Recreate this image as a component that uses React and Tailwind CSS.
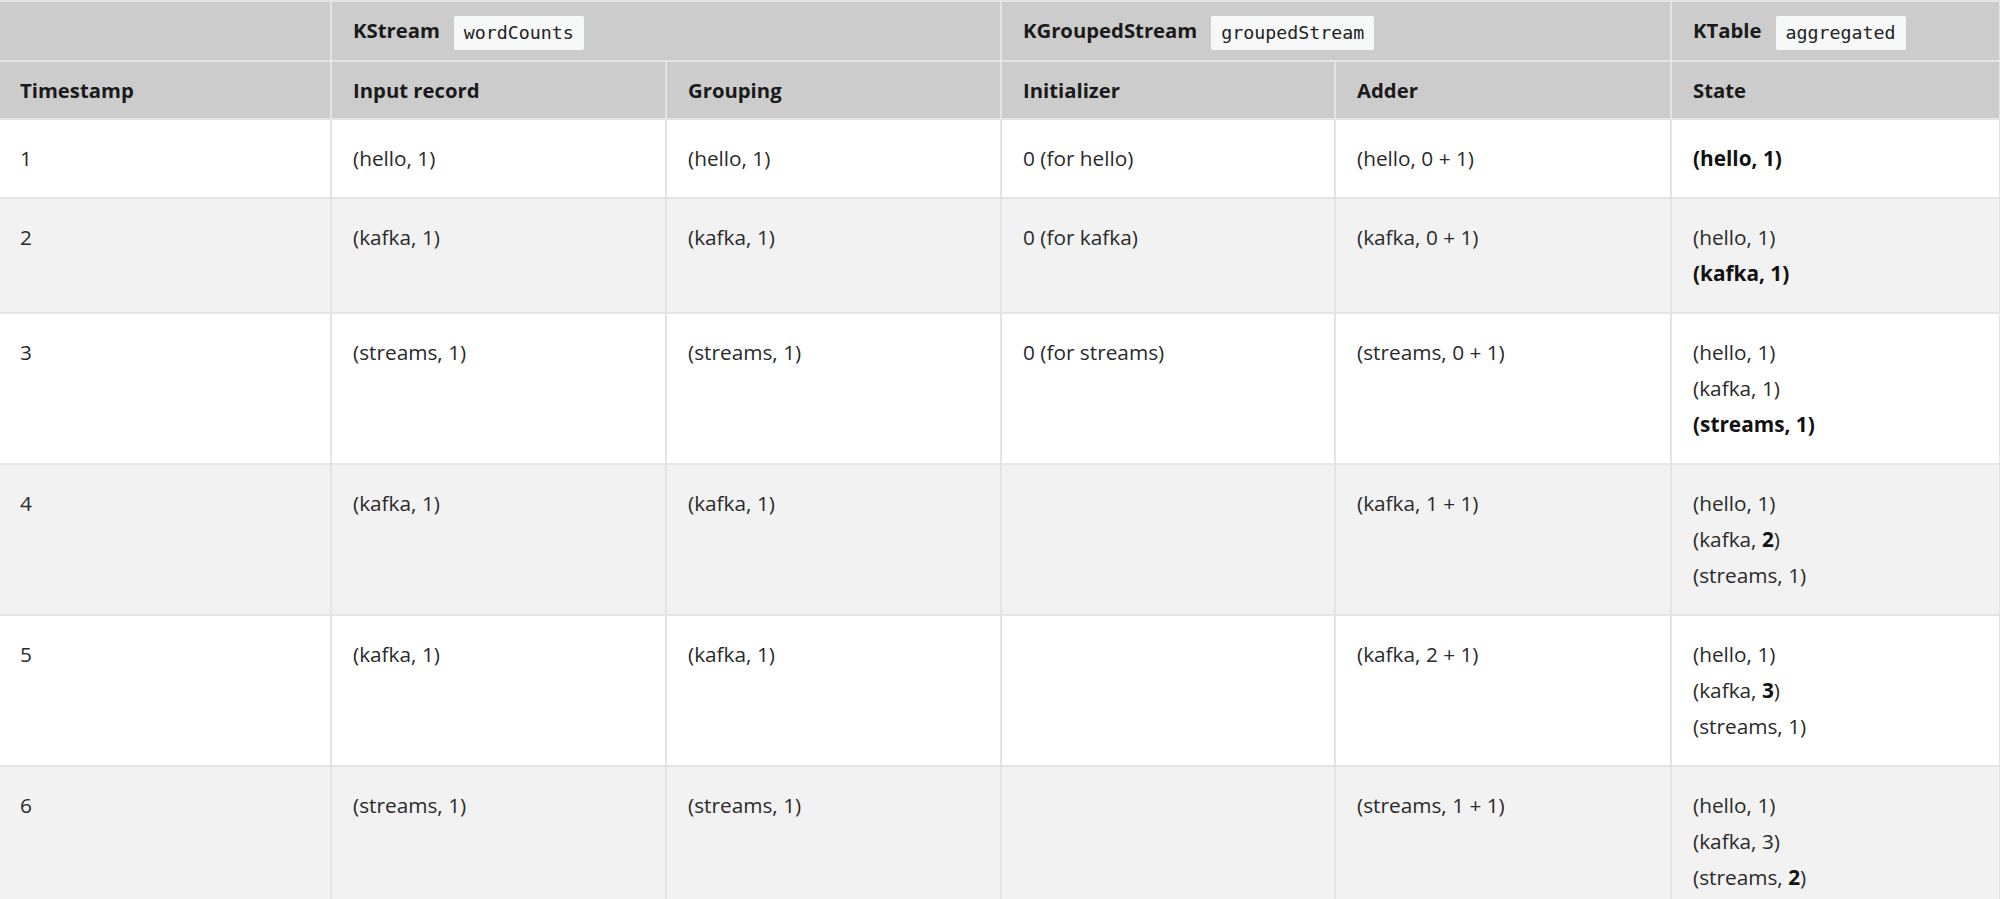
const font = "font-['Open_Sans','Noto_Sans',sans-serif]";

function Code({children}) {
  return (
    <code className="ml-[14px] inline-block rounded-[2px] bg-[#f7f9f9] px-[10px] py-[2px] align-middle font-['DejaVu_Sans_Mono',monospace] text-[18.3px] font-normal leading-[30px] text-[#222]">
      {children}
    </code>
  );
}

const rows = [
  {
    ts: '1',
    input: '(hello, 1)',
    grouping: '(hello, 1)',
    init: '0 (for hello)',
    adder: '(hello, 0 + 1)',
    state: [<b key="a" className="font-bold text-[#111]">(hello, 1)</b>],
  },
  {
    ts: '2',
    input: '(kafka, 1)',
    grouping: '(kafka, 1)',
    init: '0 (for kafka)',
    adder: '(kafka, 0 + 1)',
    state: [
      '(hello, 1)',
      <b key="b" className="font-bold text-[#111]">(kafka, 1)</b>,
    ],
  },
  {
    ts: '3',
    input: '(streams, 1)',
    grouping: '(streams, 1)',
    init: '0 (for streams)',
    adder: '(streams, 0 + 1)',
    state: [
      '(hello, 1)',
      '(kafka, 1)',
      <b key="c" className="font-bold text-[#111]">(streams, 1)</b>,
    ],
  },
  {
    ts: '4',
    input: '(kafka, 1)',
    grouping: '(kafka, 1)',
    init: '',
    adder: '(kafka, 1 + 1)',
    state: [
      '(hello, 1)',
      <span key="d">(kafka, <b className="font-bold text-[#111]">2</b>)</span>,
      '(streams, 1)',
    ],
  },
  {
    ts: '5',
    input: '(kafka, 1)',
    grouping: '(kafka, 1)',
    init: '',
    adder: '(kafka, 2 + 1)',
    state: [
      '(hello, 1)',
      <span key="e">(kafka, <b className="font-bold text-[#111]">3</b>)</span>,
      '(streams, 1)',
    ],
  },
  {
    ts: '6',
    input: '(streams, 1)',
    grouping: '(streams, 1)',
    init: '',
    adder: '(streams, 1 + 1)',
    state: [
      '(hello, 1)',
      '(kafka, 3)',
      <span key="f">(streams, <b className="font-bold text-[#111]">2</b>)</span>,
    ],
  },
];

const th = 'border-2 border-[#e4e4e4] bg-[#cccccc] px-[21px] text-left text-[20.3px] font-bold text-[#1a1a1a]';
const td = 'border-2 border-[#e4e4e4] px-[21px] pt-[20px] pb-[21px] align-top';

export default function App() {
  return (
    <div className={`h-[899px] w-[2000px] overflow-hidden bg-white ${font} text-[20.8px] leading-[36px] text-[#2a2a2a]`}>
      <table className="w-[2000px] table-fixed border-collapse border-t-2 border-[#e4e4e4]">
        <colgroup>
          <col className="w-[331px]" />
          <col className="w-[335px]" />
          <col className="w-[335px]" />
          <col className="w-[334px]" />
          <col className="w-[336px]" />
          <col className="w-[329px]" />
        </colgroup>
        <thead>
          <tr className="h-[60px]">
            <th className={`${th} border-l-0 pl-[20px]`}></th>
            <th className={th} colSpan={2}>
              KStream<Code>wordCounts</Code>
            </th>
            <th className={th} colSpan={2}>
              KGroupedStream<Code>groupedStream</Code>
            </th>
            <th className={th}>
              KTable<Code>aggregated</Code>
            </th>
          </tr>
          <tr className="h-[58px]">
            <th className={`${th} border-l-0 pl-[20px]`}>Timestamp</th>
            <th className={th}>Input record</th>
            <th className={th}>Grouping</th>
            <th className={th}>Initializer</th>
            <th className={th}>Adder</th>
            <th className={th}>State</th>
          </tr>
        </thead>
        <tbody>
          {rows.map((r, i) => (
            <tr key={r.ts} className={i % 2 === 1 ? 'bg-[#f2f2f2]' : 'bg-white'}>
              <td className={`${td} border-l-0 pl-[20px]`}>{r.ts}</td>
              <td className={td}>{r.input}</td>
              <td className={td}>{r.grouping}</td>
              <td className={td}>{r.init}</td>
              <td className={td}>{r.adder}</td>
              <td className={td}>
                {r.state.map((s, j) => (
                  <div key={j}>{s}</div>
                ))}
              </td>
            </tr>
          ))}
        </tbody>
      </table>
    </div>
  );
}
